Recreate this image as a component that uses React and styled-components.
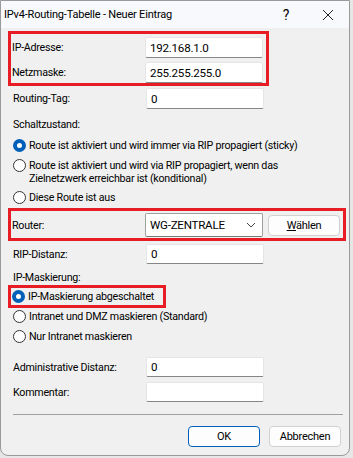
import React from 'react';
import styled, { createGlobalStyle } from 'styled-components';

const Global = createGlobalStyle`
  html, body { margin: 0; padding: 0; background: #e6e6e6; }
  body {
    font-family: Roboto, "Liberation Sans", Arial, sans-serif;
    font-size: 10.7px;
    letter-spacing: -0.25px;
    color: #000;
  }
`;

const Window = styled.div`
  width: 350px;
  height: 456px;
  box-sizing: border-box;
  border: 1px solid #9a9a9a;
  border-radius: 0 0 8px 8px;
  background: #f0f0f0;
  overflow: hidden;
  display: flex;
  flex-direction: column;
`;

const TitleBar = styled.div`
  height: 27px;
  flex-shrink: 0;
  background: #f7f9fc;
  display: flex;
  align-items: center;
  padding-left: 3px;
  font-size: 11px;
  letter-spacing: -0.2px;
`;

const Title = styled.div`
  flex: 1;
`;

const TitleButton = styled.div`
  width: 42px;
  display: flex;
  justify-content: center;
  align-items: center;
  font-size: 14px;
`;

const Body = styled.div`
  padding: 3px 0 0 7px;
  display: flex;
  flex-direction: column;
`;

const Mark = styled.div`
  border: 3px solid #e81c24;
  width: ${p => p.$w}px;
  box-sizing: border-box;
  padding: ${p => p.$pad || '0'};
  margin-top: ${p => p.$mt || 0}px;
  display: flex;
  flex-direction: column;
  gap: 4px;
`;

const Row = styled.div`
  display: flex;
  align-items: center;
  padding-left: ${p => p.$indent ?? 5}px;
  margin-top: ${p => p.$mt || 0}px;
  height: ${p => p.$h || 21}px;
`;

const Label = styled.div`
  width: 133px;
  flex-shrink: 0;
`;

const Field = styled.div`
  width: 118px;
  height: ${p => p.$h || 21}px;
  box-sizing: border-box;
  background: #fff;
  border: 1px solid #e5e5e5;
  border-bottom: 1px solid #868686;
  border-radius: 2px;
  padding: 0 4px;
  display: flex;
  align-items: center;
  font-size: 11.6px;
`;

const Combo = styled(Field)`
  border: 1px solid #a0a0a0;
  border-bottom: 1px solid #7a7a7a;
  justify-content: space-between;
  padding-right: 6px;
`;

const Button = styled.div`
  width: ${p => p.$w || 72}px;
  height: 21px;
  box-sizing: border-box;
  border: 1px solid ${p => (p.$primary ? '#005fb8' : '#d0d0d0')};
  border-radius: 4px;
  background: #fdfdfd;
  display: flex;
  align-items: center;
  justify-content: center;
  margin-left: ${p => p.$ml || 0}px;
  font-size: 11px;
`;

const Section = styled.div`
  padding-left: 5px;
  margin-top: ${p => p.$mt || 0}px;
  line-height: 16px;
  height: 16px;
`;

const RadioRow = styled.div`
  display: flex;
  align-items: flex-start;
  padding-left: ${p => p.$indent ?? 5}px;
  margin-top: ${p => p.$mt || 0}px;
  line-height: 13px;
  white-space: nowrap;
`;

const RadioDot = styled.span`
  width: 13px;
  height: 13px;
  box-sizing: border-box;
  border-radius: 50%;
  flex-shrink: 0;
  margin: 0 3px 0 0;
  border: ${p => (p.$on ? '4px solid #005fb8' : '1px solid #333')};
  background: #fff;
`;

const Separator = styled.div`
  margin: 12px 0 0 5px;
  width: 330px;
  height: 1px;
  background: #a0a0a0;
`;

const Footer = styled.div`
  display: flex;
  justify-content: flex-end;
  margin-top: 11px;
  padding-right: 8px;
`;

const Chevron = () => (
  <svg width="10" height="6" viewBox="0 0 10 6">
    <path d="M1 1 L5 5 L9 1" fill="none" stroke="#444" strokeWidth="1" />
  </svg>
);

const Radio = ({ on, children, ...rest }) => (
  <RadioRow {...rest}>
    <RadioDot $on={on} />
    <span>{children}</span>
  </RadioRow>
);

export default function App() {
  return (
    <>
      <Global />
      <Window>
        <TitleBar>
          <Title>IPv4-Routing-Tabelle - Neuer Eintrag</Title>
          <TitleButton>?</TitleButton>
          <TitleButton>
            <svg width="12" height="12" viewBox="0 0 12 12">
              <path d="M1 1 L11 11 M11 1 L1 11" stroke="#222" strokeWidth="1" />
            </svg>
          </TitleButton>
        </TitleBar>
        <Body>
          <Mark $w={261} $pad="3px 0 0 0">
            <Row $indent={1}><Label>IP-Adresse:</Label><Field>192.168.1.0</Field></Row>
            <Row $indent={1}><Label>Netzmaske:</Label><Field>255.255.255.0</Field></Row>
          </Mark>
          <Row $mt={2}><Label>Routing-Tag:</Label><Field>0</Field></Row>
          <Section $mt={8}>Schaltzustand:</Section>
          <Radio on $mt={6}>Route ist aktiviert und wird immer via RIP propagiert (sticky)</Radio>
          <Radio $mt={7}>
            Route ist aktiviert und wird via RIP propagiert, wenn das<br />
            Zielnetzwerk erreichbar ist (konditional)
          </Radio>
          <Radio $mt={6}>Diese Route ist aus</Radio>
          <Mark $w={338} $pad="2px 0 1px 0" $mt={4}>
            <Row $indent={1} $h={24}>
              <Label>Router:</Label>
              <Combo $h={24}>WG-ZENTRALE<Chevron /></Combo>
              <Button $ml={5}><span><u>W</u>ählen</span></Button>
            </Row>
          </Mark>
          <Row $mt={3} $h={20}><Label>RIP-Distanz:</Label><Field $h={20}>0</Field></Row>
          <Section $mt={6}>IP-Maskierung:</Section>
          <Mark $w={158} $pad="2px 0 2px 0" $mt={-1}>
            <Radio on $indent={1}>IP-Maskierung abgeschaltet</Radio>
          </Mark>
          <Radio $mt={2}>Intranet und DMZ maskieren (Standard)</Radio>
          <Radio $mt={7}>Nur Intranet maskieren</Radio>
          <Row $mt={14} $h={20}><Label>Administrative Distanz:</Label><Field $h={20}>0</Field></Row>
          <Row $mt={5} $h={20}><Label>Kommentar:</Label><Field $h={20} /></Row>
          <Separator />
          <Footer>
            <Button $primary>OK</Button>
            <Button $ml={9}>Abbrechen</Button>
          </Footer>
        </Body>
      </Window>
    </>
  );
}
